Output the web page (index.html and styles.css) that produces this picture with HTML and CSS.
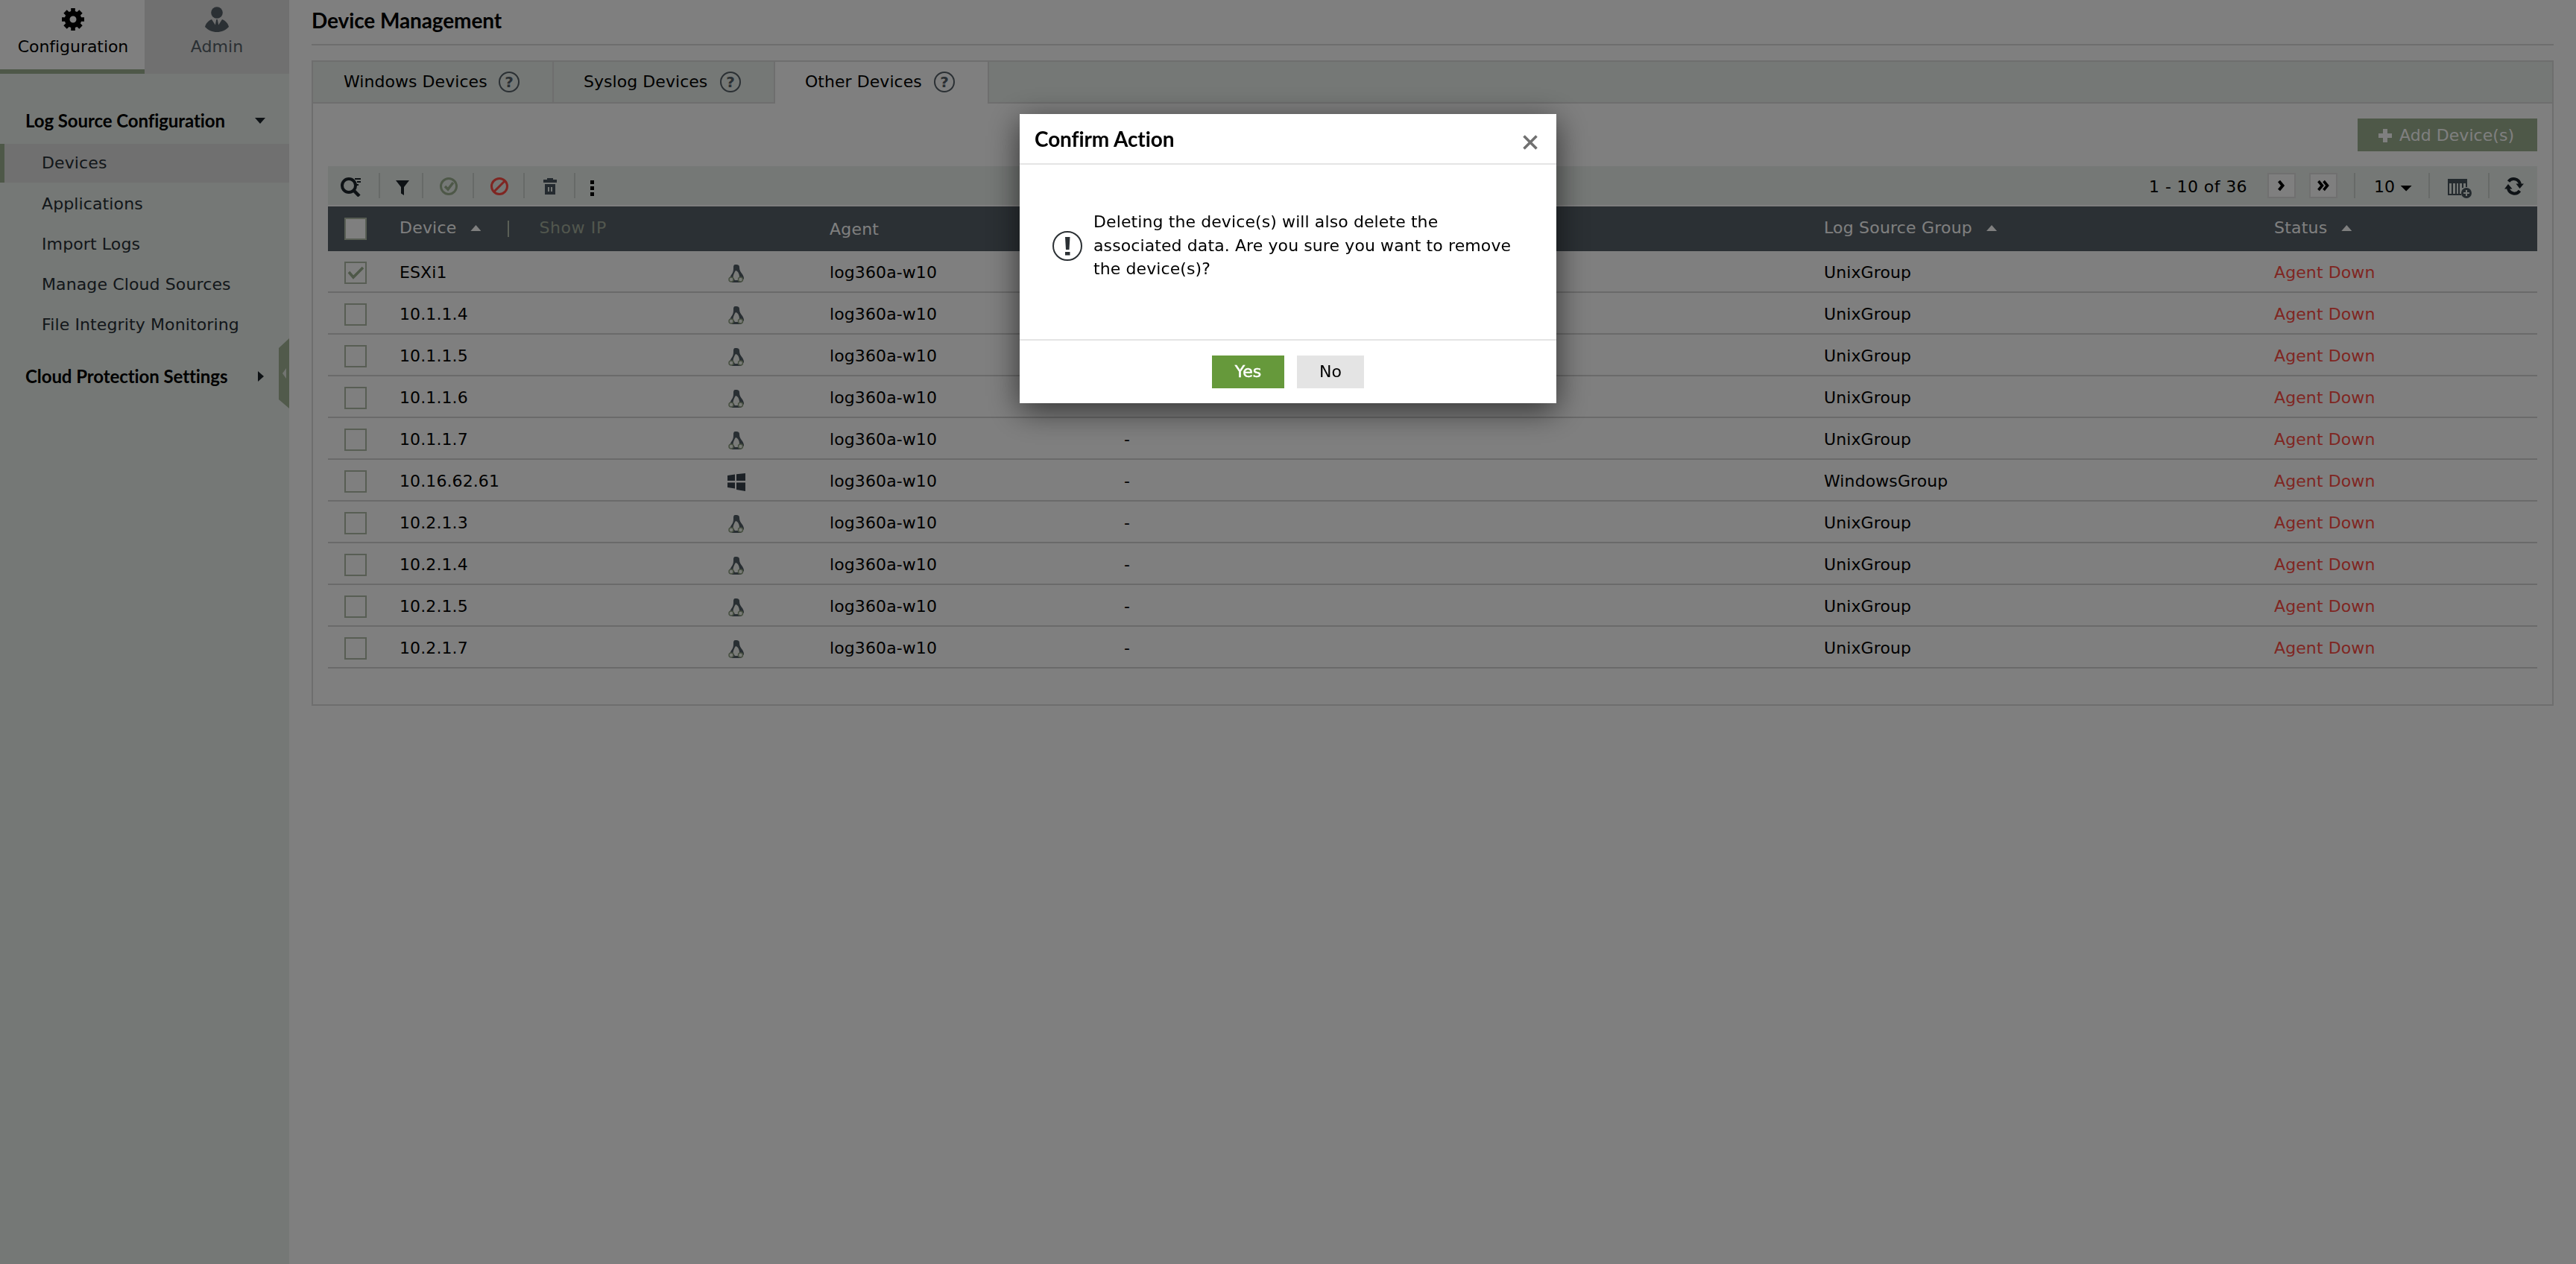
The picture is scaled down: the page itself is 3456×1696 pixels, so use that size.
FILE: index.html
```
<!DOCTYPE html>
<html lang="en">
<head>
    <meta charset="UTF-8" />
    <meta name="viewport" content="width=device-width, initial-scale=1.0"/>
    <title>Device Management</title>
    <link rel="stylesheet" href="styles.css">
</head>
<body>
    <svg class="sprite" width="0" height="0">
        <symbol id="linux" viewBox="0 0 24 24">
            <path d="M11 0C8 0 8 2 8 5c0 4-1 6-3 9-1 2-2 3-2 6l3 4h12l4-5c0-3-1-4-2-6-2-3-4-5-4-9 0-3-1-4-5-4z" fill="#525e66"/>
            <path d="M11 8c-1.500 2-3.500 6-3.500 9l2.500 4h4l2-4c0-4-1.500-8-5-9z" fill="#f4f6f2"/>
            <circle cx="5" cy="20" r="3" fill="#eef2ea" stroke="#8fa083" stroke-width="1.500"/>
            <circle cx="17.500" cy="20" r="3" fill="#eef2ea" stroke="#8fa083" stroke-width="1.500"/>
        </symbol>
        <symbol id="windows" viewBox="0 0 24 24">
            <path d="M0 3 10 1.500V10H0zM12 1.200 24 0v10H12zM0 12.500h10v8L0 19zM12 12.500h12V24l-12-2z" fill="#38434c"/>
        </symbol>
    </svg>

    <aside class="sidebar">
        <div class="side-tabs">
            <div class="side-tab active">
                <svg width="30" height="30" viewBox="0 0 30 30">
                    <path d="M12.200 0h5.600v4l2.600 1.100L23.300 2.300 27.700 6.700 24.900 9.600 26 12.200h4v5.600h-4l-1.100 2.600 2.800 2.900-4.400 4.400-2.900-2.800-2.600 1.100v4h-5.600v-4l-2.600-1.100-2.900 2.800-4.400-4.400 2.800-2.900L4 17.800H0v-5.600h4l1.100-2.600L2.300 6.700 6.700 2.300l2.900 2.800L12.200 4zM15 10.500a4.500 4.500 0 1 0 0 9 4.500 4.500 0 0 0 0-9z" fill="#000" fill-rule="evenodd"/>
                </svg>
                <span>Configuration</span>
            </div>
            <div class="side-tab">
                <svg width="32" height="34" viewBox="0 0 32 34">
                    <circle cx="16" cy="8" r="7.800" fill="#566068"/>
                    <path d="M9 17l4.800 7.500L15.300 17h1.400l1.500 7.500L23 17c5 2 8 6 9 10-4 4.500-10 7-16 7S4 31.500 0 27c1-4 4-8 9-10z" fill="#566068"/>
                </svg>
                <span>Admin</span>
            </div>
        </div>
        <div class="side-title">Log Source Configuration <i class="caret down"></i></div>
        <ul class="side-menu">
            <li class="active">Devices</li>
            <li>Applications</li>
            <li>Import Logs</li>
            <li>Manage Cloud Sources</li>
            <li>File Integrity Monitoring</li>
        </ul>
        <div class="side-title second">Cloud Protection Settings <i class="caret right"></i></div>
        <div class="collapse"><i class="caret left"></i></div>
    </aside>

    <main>
        <h1>Device Management</h1>
        <section class="panel">
            <div class="tabs">
                <div class="tab">Windows Devices <span class="help">?</span></div>
                <div class="tab">Syslog Devices <span class="help">?</span></div>
                <div class="tab active">Other Devices <span class="help">?</span></div>
                <div class="tab-fill"></div>
            </div>
            <div class="content">
                <div class="actions">
                    <button class="btn add">
                        <svg width="18" height="18" viewBox="0 0 18 18"><path d="M6 0h6v6h6v6h-6v6H6v-6H0V6h6z" fill="#fff"/></svg>
                        Add Device(s)
                    </button>
                </div>
                <div class="toolbar">
                    <div class="tool search">
                        <svg width="28" height="26" viewBox="0 0 28 26" fill="none" stroke="#1c242b">
                            <circle cx="11" cy="11" r="9" stroke-width="4"/>
                            <path d="M17 17l8 8" stroke-width="4.500"/>
                            <path d="M19 2h8M22 6h5M21 10h3" stroke-width="1.800"/>
                        </svg>
                    </div>
                    <div class="tool filter">
                        <svg width="18" height="20" viewBox="0 0 18 20"><path d="M0 0h18l-7 9v11l-4-2.500V9z" fill="#1c242b"/></svg>
                    </div>
                    <div class="tool">
                        <svg width="24" height="24" viewBox="0 0 24 24" fill="none" stroke="#9cb090">
                            <circle cx="12" cy="12" r="10.500" stroke-width="3"/>
                            <path d="M7 12l4 4 7-9" stroke-width="3.500"/>
                        </svg>
                    </div>
                    <div class="tool">
                        <svg width="24" height="24" viewBox="0 0 24 24" fill="none" stroke="#ff4c44" stroke-width="3">
                            <circle cx="12" cy="12" r="10.500"/>
                            <path d="M4.500 19.500l15-15"/>
                        </svg>
                    </div>
                    <div class="tool">
                        <svg width="18" height="22" viewBox="0 0 18 22" fill="#48545e">
                            <path d="M5 0h8v2h5v4H0V2h5z"/>
                            <path fill-rule="evenodd" d="M2 8h14v14H2zM6 12v6h2v-6zM10 12v6h2v-6z"/>
                        </svg>
                    </div>
                    <div class="more"><i></i><i></i><i></i></div>
                    <div class="pager">
                        <span class="count">1 - 10 of 36</span>
                        <span class="page">
                            <svg width="10" height="16" viewBox="0 0 10 16"><path d="M1.500 2l5 6-5 6" fill="none" stroke="#000" stroke-width="4"/></svg>
                        </span>
                        <span class="page">
                            <svg width="16" height="16" viewBox="0 0 16 16"><path d="M1.500 2l5 6-5 6M8.500 2l5 6-5 6" fill="none" stroke="#000" stroke-width="3.600"/></svg>
                        </span>
                        <span class="size">10 <i class="caret down black"></i></span>
                        <span class="columns">
                            <svg width="32" height="26" viewBox="0 0 32 26">
                                <path d="M0 0h26v11h-2V6h-3v6h-2V6h-3v14h2v2H0zM2 6v14h3V6zM7 6v14h3V6zM12 6v14h2V6z" fill="#48545c" fill-rule="evenodd"/>
                                <circle cx="25" cy="19" r="7" fill="#48545c"/>
                                <path d="M25 15v8M21 19h8" stroke="#eaf0ec" stroke-width="2"/>
                            </svg>
                        </span>
                        <span class="refresh">
                            <svg width="26" height="24" viewBox="0 0 26 24">
                                <path d="M5.500 5.500C9.500 0 19 1 21 9M20.500 18C16 24 7 22.500 5 15" fill="none" stroke="#1c242b" stroke-width="4"/>
                                <path d="M15.500 8.500H26l-5.500 6.500zM0 15.500l5-6.500 5.500 6.500z" fill="#1c242b"/>
                            </svg>
                        </span>
                    </div>
                </div>
                <div class="row head">
                    <span class="check"><i class="box filled"></i></span>
                    <span class="device-head">Device <i class="caret up"></i><i class="bar"></i><em>Show IP</em></span>
                    <span></span>
                    <span class="agent-head">Agent</span>
                    <span></span>
                    <span>Log Source Group <i class="caret up"></i></span>
                    <span>Status <i class="caret up"></i></span>
                </div>
                <div id="devices"></div>
            </div>
        </section>
    </main>

    <div class="overlay"></div>
    <div class="modal">
        <div class="modal-header">
            <h2>Confirm Action</h2>
            <svg width="20" height="20" viewBox="0 0 20 20"><path d="M1.500 1.500l17 17M18.500 1.500l-17 17" stroke="#707070" stroke-width="3.600"/></svg>
        </div>
        <div class="modal-body">
            <svg width="40" height="40" viewBox="0 0 40 40">
                <circle cx="20" cy="20" r="19" fill="none" stroke="#2b3034" stroke-width="2"/>
                <path d="M17 8h6.500l-1 17h-4.500zM17 28h6.500v4.500H17z" fill="#2b3034"/>
            </svg>
            <p>Deleting the device(s) will also delete the associated data. Are you sure you want to remove the device(s)?</p>
        </div>
        <div class="modal-footer">
            <button class="btn yes">Yes</button>
            <button class="btn no">No</button>
        </div>
    </div>

    <script>
        const devices = ['ESXi1', '10.1.1.4', '10.1.1.5', '10.1.1.6', '10.1.1.7', '10.16.62.61', '10.2.1.3', '10.2.1.4', '10.2.1.5', '10.2.1.7'];
        const tick = '<svg width="24" height="18" viewBox="0 0 24 18"><path d="M2 8l6 7L21 2" fill="none" stroke="#9cb090" stroke-width="3.600"/></svg>';

        document.getElementById('devices').innerHTML = devices.map((name, i) => {
            const win = name === '10.16.62.61';
            return `<div class="row">
                <span class="check"><i class="box">${i === 0 ? tick : ''}</i></span>
                <span>${name}</span>
                <span class="os"><svg width="24" height="24"><use href="#${win ? 'windows' : 'linux'}"/></svg></span>
                <span>log360a-w10</span>
                <span class="dash">${i === 0 ? '' : '-'}</span>
                <span>${win ? 'WindowsGroup' : 'UnixGroup'}</span>
                <span class="down-status">Agent Down</span>
            </div>`;
        }).join('');
    </script>
</body>
</html>
```
FILE: styles.css
```
* {
    box-sizing: border-box;
}

body {
    margin: 0;
    display: flex;
    height: 1696px;
    overflow: hidden;
    background: #fff;
    font: 22px/26px "DejaVu Sans", Verdana, sans-serif;
    letter-spacing: 0.05px;
    color: #000;
}

svg {
    display: block;
    flex: none;
}

.sprite {
    position: absolute;
}

i {
    display: block;
    flex: none;
}

/* carets */
.caret {
    width: 14px;
    height: 8px;
    background: #1c242b;
}

.caret.down {
    clip-path: polygon(0 0, 100% 0, 50% 100%);
}

.caret.up {
    background: #fff;
    clip-path: polygon(0 100%, 50% 0, 100% 100%);
}

.caret.right {
    width: 8px;
    height: 14px;
    clip-path: polygon(0 0, 100% 50%, 0 100%);
}

.caret.left {
    width: 5px;
    height: 14px;
    background: #e4e8e2;
    clip-path: polygon(100% 0, 100% 100%, 0 50%);
}

.caret.black {
    width: 16px;
    background: #000;
}

/* sidebar */
.sidebar {
    position: relative;
    flex: none;
    width: 388px;
    background: #eaf0ec;
}

.side-tabs {
    display: flex;
    height: 99px;
}

.side-tab {
    display: flex;
    flex-direction: column;
    align-items: center;
    justify-content: space-between;
    width: 194px;
    padding: 9px 0 23px;
    background: #e0e0e0;
    color: #566068;
}

.side-tab.active {
    padding: 11px 0 17px 2px;
    background: #fff;
    color: #000;
    border-bottom: 6px solid #9cb090;
    letter-spacing: -0.05px;
}

.side-title {
    display: flex;
    align-items: center;
    justify-content: space-between;
    height: 60px;
    margin-top: 33px;
    padding: 0 32px 0 34px;
    font-family: Lato, sans-serif;
    font-size: 24px;
    font-weight: bold;
    letter-spacing: -0.08px;
}

.side-title.second {
    margin-top: 13px;
    padding-right: 34px;
}

.side-menu {
    margin: 0;
    padding: 0;
    list-style: none;
    color: #262e35;
    letter-spacing: 0.12px;
}

.side-menu li {
    height: 54px;
    padding: 1px 0 0 56px;
    line-height: 54px;
}

.side-menu li.active {
    height: 52px;
    margin: 1px 0;
    padding: 0 0 0 50px;
    line-height: 52px;
    border-left: 6px solid #9cb090;
    background: #e0e0e0;
}

.collapse {
    position: absolute;
    top: 454px;
    right: 0;
    width: 14px;
    height: 94px;
    padding: 40px 0 0 5px;
    background: #a2b496;
    clip-path: polygon(100% 0, 100% 100%, 0 82px, 0 13px);
}

/* main area */
main {
    flex: 1;
    padding: 0 30px;
}

h1 {
    height: 61px;
    margin: 0 0 20px;
    padding-top: 10px;
    border-bottom: 2px solid #dcdcdc;
    font: bold 28px/34px Lato, sans-serif;
    letter-spacing: -0.1px;
}

.panel {
    height: 866px;
    border: 2px solid #dcdcdc;
}

.tabs {
    display: flex;
    height: 56px;
}

.tab {
    display: flex;
    flex: none;
    align-items: center;
    justify-content: space-between;
    padding: 0 44px 0 40px;
    height: 56px;
    border-right: 2px solid #dcdcdc;
    border-bottom: 2px solid #dcdcdc;
    background: #eaf0ec;
    white-space: nowrap;
}

.tab:first-child {
    width: 323px;
    padding-left: 41px;
}

.tab:nth-child(2) {
    width: 297px;
}

.tab.active {
    width: 287px;
    background: #fff;
    border-bottom: 0;
    padding-bottom: 2px;
}

.tab-fill {
    flex: 1;
    border-bottom: 2px solid #dcdcdc;
    background: #eaf0ec;
}

.help {
    width: 28px;
    height: 28px;
    border: 2px solid #566068;
    border-radius: 50%;
    color: #566068;
    font-size: 20px;
    font-weight: bold;
    line-height: 24px;
    text-align: center;
}

.content {
    padding: 20px 20px 0;
}

.actions {
    display: flex;
    justify-content: flex-end;
}

.btn {
    height: 44px;
    padding: 0;
    border: 0;
    font: inherit;
    letter-spacing: inherit;
    cursor: pointer;
}

.add {
    display: flex;
    align-items: center;
    gap: 10px;
    width: 241px;
    padding: 1px 0 0 28px;
    background: #9cb090;
    color: #fff;
}

/* toolbar */
.toolbar {
    display: flex;
    align-items: center;
    height: 52px;
    margin: 20px 0 2px;
    background: #eaf0ec;
}

.tool {
    display: flex;
    align-items: center;
    justify-content: center;
    width: 68px;
    height: 34px;
    padding: 2px 0 0 1px;
    border-right: 2px solid #cfd4d0;
}

.tool.search {
    width: 70px;
    padding: 4px 6px 0 0;
}

.tool.filter {
    width: 58px;
    padding: 6px 0 0 3px;
}

.more {
    display: flex;
    flex-direction: column;
    gap: 3px;
    margin: 6px 0 0 20px;
}

.more i {
    width: 5px;
    height: 5px;
    background: #000;
}

.pager {
    display: flex;
    align-items: center;
    margin-left: auto;
}

.count {
    margin-right: 27px;
    padding-top: 4px;
    letter-spacing: 0.4px;
}

.page {
    display: flex;
    align-items: center;
    justify-content: center;
    width: 38px;
    height: 34px;
    margin-right: 18px;
    border: 2px solid #e0e0e0;
    background: #fff;
}

.size,
.columns,
.refresh {
    display: flex;
    align-items: center;
    height: 34px;
    border-left: 2px solid #cfd4d0;
}

.size {
    width: 100px;
    margin-left: 4px;
    padding: 3px 0 0 25px;
    gap: 7px;
}

.size .caret {
    margin-top: 4px;
}

.columns {
    width: 80px;
    padding: 7px 0 0 24px;
}

.refresh {
    width: 66px;
    padding: 2px 0 0 20px;
}

/* table */
.row {
    display: grid;
    grid-template-columns: 96px 441px 136px 394px 940px 604px 353px;
    align-items: center;
    height: 56px;
    border-bottom: 2px solid #d4d4d4;
    padding-top: 3px;
    letter-spacing: 0.1px;
}

.row.head {
    height: 60px;
    padding: 0 0 2px;
    border: 0;
    background: #566068;
    color: #fff;
    letter-spacing: 0.2px;
}

.row.head span {
    display: flex;
    align-items: center;
}

.row.head .caret {
    margin-left: 19px;
}

.row.head .agent-head {
    padding-top: 3px;
}

.row .check {
    padding-left: 22px;
}

.row.head .check {
    padding-top: 1px;
}

.box {
    width: 30px;
    height: 30px;
    border: 2px solid #b0bca8;
}

.box svg {
    margin: 4px 0 0 2px;
}

.box.filled {
    background: #fff;
}

.bar {
    width: 2px;
    height: 22px;
    margin: 2px 40px 0 36px;
    background: #b4bfac;
}

em {
    font-style: normal;
    color: #a4ae9d;
    letter-spacing: 0.6px;
}

.os {
    padding-top: 3px;
    margin-left: -1px;
}

.dash {
    padding-left: 1px;
}

.down-status {
    color: #ff4c44;
}

/* dialog */
.overlay {
    position: fixed;
    inset: 0;
    background: rgba(0, 0, 0, 0.5);
}

.modal {
    position: fixed;
    top: 153px;
    left: 1368px;
    display: flex;
    flex-direction: column;
    width: 720px;
    height: 388px;
    background: #fff;
    box-shadow: 0 10px 40px rgba(0, 0, 0, 0.6);
}

.modal-header {
    display: flex;
    align-items: center;
    justify-content: space-between;
    height: 68px;
    padding: 0 25px 0 20px;
    border-bottom: 2px solid #e4e4e4;
}

.modal-header svg {
    margin-top: 10px;
}

h2 {
    margin: 0;
    font: bold 28px/34px Lato, sans-serif;
    letter-spacing: -0.1px;
}

.modal-body {
    display: flex;
    flex: 1;
    padding: 60px 40px 0 44px;
}

.modal-body svg {
    margin-top: 29px;
}

.modal-body p {
    width: 580px;
    margin: 1px 0 0 15px;
    line-height: 31.5px;
    letter-spacing: 0.1px;
}

.modal-footer {
    display: flex;
    justify-content: center;
    gap: 17px;
    height: 86px;
    padding-top: 20px;
    border-top: 2px solid #e4e4e4;
}

.yes {
    width: 97px;
    background: #66993b;
    color: #fff;
    -webkit-text-stroke: 0.5px #fff;
}

.no {
    width: 90px;
    background: #e4e4e4;
    color: #000;
}
```
